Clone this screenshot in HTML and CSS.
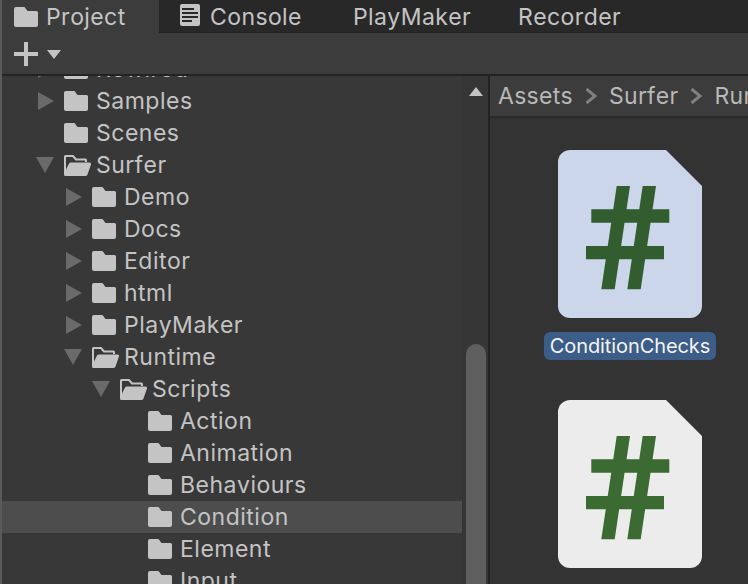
FILE: index.html
```html
<!DOCTYPE html>
<html lang="en">
<head>
<meta charset="utf-8">
<title>Project</title>
<link rel="stylesheet" href="styles.css">
</head>
<body>
<svg class="defs" width="0" height="0" aria-hidden="true">
  <symbol id="folder" viewBox="0 0 24 20"><path d="M2 0H10.500L13.500 4H22.500A1.500 1.500 0 0 1 24 5.500V18A2 2 0 0 1 22 20H2A2 2 0 0 1 0 18V2A2 2 0 0 1 2 0Z"/></symbol>
  <symbol id="folder-open" viewBox="0 0 27 21"><path d="M1.500 0H9.500L12.500 3.500H21.500A1.500 1.500 0 0 1 23 5V7H21V5.500H11.500L8.500 2H2V14.500L5 8.500A2 2 0 0 1 6.800 7.500H25.500A1.500 1.500 0 0 1 27 9.500L23.500 19.500A2 2 0 0 1 21.700 21H1.500A1.500 1.500 0 0 1 0 19.500V1.500A1.500 1.500 0 0 1 1.500 0Z"/></symbol>
  <symbol id="script" viewBox="0 0 144 168"><path class="sheet" d="M12 0H108L144 36V156A12 12 0 0 1 132 168H12A12 12 0 0 1 0 156V12A12 12 0 0 1 12 0Z"/><path class="hash" d="M58.700 36H72L56.700 139.300H43.300ZM84.700 36H98L82.700 139.300H69.300ZM33.300 59.300H111.300V72.700H33.300ZM28 96H106V109.300H28Z"/></symbol>
</svg>
<div class="window">
  <nav class="tabs">
    <div class="tab active">
      <svg class="tab-icon"><use href="#folder"/></svg>
      <span>Project</span>
    </div>
    <div class="tab console">
      <svg class="console-icon" viewBox="0 0 20 22"><path fill-rule="evenodd" d="M2 0H18A2 2 0 0 1 20 2V20A2 2 0 0 1 18 22H2A2 2 0 0 1 0 20V2A2 2 0 0 1 2 0ZM2 4V6H14V4ZM2 8V10H18V8ZM2 12V14H18V12ZM2 16V18H12V16Z"/></svg>
      <span>Console</span>
    </div>
    <div class="tab plain">PlayMaker</div>
    <div class="tab plain last">Recorder</div>
  </nav>
  <div class="toolbar">
    <span class="plus"></span>
    <span class="caret"></span>
  </div>
  <main class="panes">
    <section class="tree">
      <ul class="rows">
        <li class="row l1 closed"><i class="arrow right"></i><svg class="fold"><use href="#folder"/></svg><span>Rewired</span></li>
        <li class="row l1"><i class="arrow right"></i><svg class="fold"><use href="#folder"/></svg><span>Samples</span></li>
        <li class="row l1"><i class="arrow none"></i><svg class="fold"><use href="#folder"/></svg><span>Scenes</span></li>
        <li class="row l1"><i class="arrow down"></i><svg class="fold open"><use href="#folder-open"/></svg><span>Surfer</span></li>
        <li class="row l2"><i class="arrow right"></i><svg class="fold"><use href="#folder"/></svg><span>Demo</span></li>
        <li class="row l2"><i class="arrow right"></i><svg class="fold"><use href="#folder"/></svg><span>Docs</span></li>
        <li class="row l2"><i class="arrow right"></i><svg class="fold"><use href="#folder"/></svg><span>Editor</span></li>
        <li class="row l2"><i class="arrow right"></i><svg class="fold"><use href="#folder"/></svg><span>html</span></li>
        <li class="row l2"><i class="arrow right"></i><svg class="fold"><use href="#folder"/></svg><span>PlayMaker</span></li>
        <li class="row l2"><i class="arrow down"></i><svg class="fold open"><use href="#folder-open"/></svg><span>Runtime</span></li>
        <li class="row l3"><i class="arrow down"></i><svg class="fold open"><use href="#folder-open"/></svg><span>Scripts</span></li>
        <li class="row l4"><i class="arrow none"></i><svg class="fold"><use href="#folder"/></svg><span>Action</span></li>
        <li class="row l4"><i class="arrow none"></i><svg class="fold"><use href="#folder"/></svg><span>Animation</span></li>
        <li class="row l4"><i class="arrow none"></i><svg class="fold"><use href="#folder"/></svg><span>Behaviours</span></li>
        <li class="row l4 selected"><i class="arrow none"></i><svg class="fold"><use href="#folder"/></svg><span>Condition</span></li>
        <li class="row l4"><i class="arrow none"></i><svg class="fold"><use href="#folder"/></svg><span>Element</span></li>
        <li class="row l4"><i class="arrow none"></i><svg class="fold"><use href="#folder"/></svg><span>Input</span></li>
      </ul>
    </section>
    <aside class="scrollbar">
      <span class="up"></span>
      <span class="thumb"></span>
    </aside>
    <section class="assets">
      <div class="crumbs">
        <span>Assets</span>
        <svg class="chev" viewBox="0 0 12 16"><path d="M1.500 1L10 8L1.500 15"/></svg>
        <span>Surfer</span>
        <svg class="chev" viewBox="0 0 12 16"><path d="M1.500 1L10 8L1.500 15"/></svg>
        <span>Runtime</span>
      </div>
      <div class="grid">
        <figure class="item tinted">
          <svg class="file"><use href="#script"/></svg>
          <figcaption class="label">ConditionChecks</figcaption>
        </figure>
        <figure class="item">
          <svg class="file"><use href="#script"/></svg>
        </figure>
      </div>
    </section>
  </main>
</div>
</body>
</html>
```
FILE: styles.css
```css
* { box-sizing: border-box; }
html, body { margin: 0; height: 100%; overflow: hidden; }
body { background: #383838; font-family: Inter, "Liberation Sans", sans-serif; color: #c4c4c4; font-kerning: none; }
.defs { position: absolute; }
.window { width: 748px; height: 584px; display: flex; flex-direction: column; border-left: 2px solid #5a5a5a; overflow: hidden; }

.tabs { height: 33px; flex: none; display: flex; background: #282828; font-size: 23px; letter-spacing: .4px; }
.tab { display: flex; align-items: center; white-space: nowrap; border-bottom: 1px solid #222; }
.tab span, .plain { padding-top: 1px; }
.tab.active { width: 157px; background: #3c3c3c; border-bottom: 0; padding-left: 12px; gap: 8px; }
.tab.active span { padding-top: 0; }
.tab-icon { width: 24px; height: 20px; fill: #c4c4c4; }
.console { padding-left: 21px; gap: 10px; width: 171px; }
.console-icon { width: 20px; height: 22px; margin-bottom: 3px; fill: #c4c4c4; }
.plain { padding-left: 23px; width: 188px; }
.plain.last { padding-left: 0; flex: 1; }

.toolbar { height: 43px; flex: none; display: flex; align-items: center; padding-left: 12px; gap: 9px; background: #3c3c3c; border-bottom: 2px solid #232323; }
.plus { width: 24px; height: 24px; background: linear-gradient(#c4c4c4, #c4c4c4) center / 24px 4px no-repeat, linear-gradient(#c4c4c4, #c4c4c4) center / 4px 24px no-repeat; }
.caret { width: 0; height: 0; margin-top: 1px; border: 7px solid transparent; border-top: 9px solid #c4c4c4; border-bottom: 0; }

.panes { flex: 1; min-height: 0; display: flex; }
.tree { width: 460px; flex: none; overflow: hidden; }
.rows { list-style: none; margin: -23px 0 0; padding: 0; font-size: 23px; letter-spacing: .5px; }
.row { height: 32px; display: flex; align-items: center; }
.row span { margin-left: 8px; white-space: nowrap; }
.l1 { padding-left: 35px; }
.l2 { padding-left: 63px; }
.l3 { padding-left: 91px; }
.l4 { padding-left: 119px; }
.selected { background: #4d4d4d; }
.arrow { width: 27px; flex: none; height: 20px; display: block; position: relative; }
.arrow.right::before { content: ""; position: absolute; left: 1px; top: 1px; border: 9px solid transparent; border-left: 16px solid #6a6a6a; border-right: 0; }
.arrow.down::before { content: ""; position: absolute; left: -1px; top: 2px; border: 9px solid transparent; border-top: 16px solid #6a6a6a; border-bottom: 0; }
.fold { width: 24px; height: 20px; fill: #c4c4c4; flex: none; }
.fold.open { width: 27px; height: 21px; margin-right: -3px; }

.scrollbar { width: 26px; flex: none; position: relative; background: #363636; border-left: 1px solid #333; }
.up { position: absolute; left: 6px; top: 11px; border: 7px solid transparent; border-bottom: 9px solid #c4c4c4; border-top: 0; }
.thumb { position: absolute; left: 3px; top: 268px; bottom: -20px; width: 20px; border-radius: 10px; background: #5f5f5f; }

.assets { flex: 1; min-width: 0; display: flex; flex-direction: column; border-left: 2px solid #222; background: #333; overflow: hidden; }
.crumbs { height: 42px; flex: none; display: flex; align-items: center; gap: 12px; padding-left: 8px; background: #3c3c3c; border-bottom: 2px solid #2a2a2a; font-size: 23px; letter-spacing: .3px; color: #b8b8b8; white-space: nowrap; }
.chev { width: 12px; height: 16px; flex: none; fill: none; stroke: #808080; stroke-width: 3; }
.grid { padding-top: 32px; display: flex; flex-direction: column; }
.item { margin: 0; width: 280px; display: flex; flex-direction: column; align-items: center; --sheet: #ececec; --hash: #3b6a32; }
.item + .item { margin-top: 40px; }
.file { width: 144px; height: 168px; flex: none; }
.sheet { fill: var(--sheet); }
.hash { fill: var(--hash); }
.tinted { --sheet: #ccd6eb; --hash: #325e2f; }
.label { margin-top: 14px; font-size: 20px; letter-spacing: -.1px; line-height: 28px; padding: 0 6px; border-radius: 6px; color: #f4f4f4; white-space: nowrap; background: #3b5d88; }
```
